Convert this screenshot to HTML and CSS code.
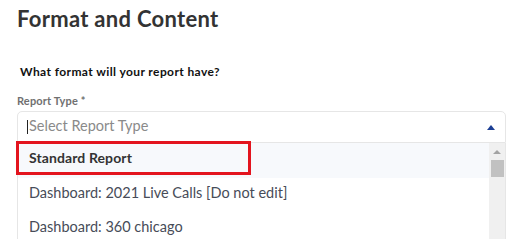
FILE: index.html
```html
<!DOCTYPE html>
<html>
<head>
<meta charset="utf-8">
<link rel="stylesheet" href="styles.css">
</head>
<body>
<div class="page">
  <h1 class="title">Format and Content</h1>
  <p class="question">What format will your report have?</p>
  <label class="label">Report Type *</label>
  <div class="select">
    <div class="control">
      <span class="cursor"></span><span class="placeholder">Select Report Type</span>
      <svg class="caret" width="8" height="5" viewBox="0 0 8 5"><path d="M0 5 L4 0 L8 5 Z" fill="#1c3f94"/></svg>
    </div>
    <div class="menu">
      <div class="options">
        <div class="option active">Standard Report<span class="highlight"></span></div>
        <div class="option">Dashboard: 2021 Live Calls [Do not edit]</div>
        <div class="option">Dashboard: 360 chicago</div>
      </div>
      <div class="scrollbar">
        <svg class="sb-arrow" width="8" height="4" viewBox="0 0 8 4"><path d="M0 4 L4 0 L8 4 Z" fill="#a3a3a3"/></svg>
        <div class="thumb"></div>
      </div>
    </div>
  </div>
</div>
</body>
</html>
```
FILE: styles.css
```css
html, body {
  margin: 0;
  padding: 0;
  background: #ffffff;
  overflow: hidden;
}
.page {
  padding: 6px 12px 0 17px;
  font-family: Lato, "Noto Sans", sans-serif;
}
.title {
  margin: 0;
  font-size: 22px;
  line-height: 26px;
  font-weight: 700;
  color: #333333;
  letter-spacing: 0.3px;
}
.question {
  margin: 32px 0 0 3px;
  font-size: 12px;
  line-height: 15px;
  font-weight: 700;
  color: #111111;
  letter-spacing: 0.4px;
}
.label {
  display: block;
  margin-top: 15px;
  font-size: 11px;
  line-height: 14px;
  font-weight: 700;
  color: #707070;
  letter-spacing: 0.15px;
}
.select {
  margin-top: 3px;
  width: 489px;
}
.control {
  box-sizing: border-box;
  height: 32px;
  border: 1px solid #e6e6e6;
  border-radius: 5px 5px 0 0;
  display: flex;
  align-items: center;
  padding: 0 10px 3px 9px;
}
.cursor {
  width: 1px;
  height: 14px;
  background: #222;
  margin-right: 1px;
  margin-top: 3px;
}
.placeholder {
  flex: 1;
  font-size: 14.5px;
  color: #8a8a8a;
}
.caret {
  display: block;
  margin-top: 4px;
}
.menu {
  display: flex;
  border-left: 1px solid #e6e6e6;
  border-right: 1px solid #e6e6e6;
  height: 96px;
}
.options {
  flex: 1;
}
.option {
  box-sizing: border-box;
  position: relative;
  height: 34px;
  display: flex;
  align-items: center;
  padding: 0 0 6px 11px;
  font-size: 14.5px;
  color: #474c58;
  letter-spacing: 0;
}
.option.active {
  height: 35px;
  background: #f7f9fc;
  font-weight: 700;
  font-size: 14px;
  color: #333333;
  letter-spacing: 0.1px;
}
.highlight {
  position: absolute;
  left: -2px;
  top: -2px;
  width: 229px;
  height: 28px;
  border: 3px solid #e3141e;
}
.scrollbar {
  width: 16px;
  background: #f0f0f0;
  display: flex;
  flex-direction: column;
  align-items: center;
}
.sb-arrow {
  display: block;
  margin-top: 7px;
}
.thumb {
  margin-top: 6px;
  width: 13px;
  height: 17px;
  background: #c1c1c1;
}
```
